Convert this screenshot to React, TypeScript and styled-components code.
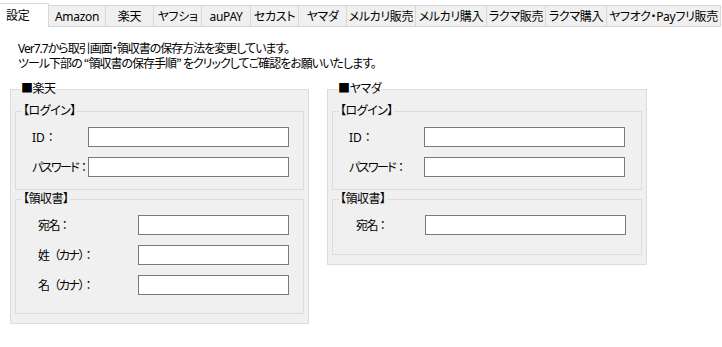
import React from "react";
import styled, { createGlobalStyle } from "styled-components";

const Global = createGlobalStyle`
  html, body { margin: 0; padding: 0; background: #ffffff; }
  body {
    font-family: "Noto Sans", "Noto Sans CJK JP", sans-serif;
    font-size: 12px;
    color: #000;
    font-feature-settings: "palt";
  }
  * { box-sizing: border-box; }
`;

const Window = styled.div`
  width: 722px;
  height: 347px;
  background: #fff;
  overflow: hidden;
`;

const TabBar = styled.div`
  display: flex;
  align-items: flex-end;
  height: 27px;
`;

const Tab = styled.div<{ $w: number; $active?: boolean }>`
  width: ${(p) => p.$w}px;
  height: ${(p) => (p.$active ? 24 : 22)}px;
  margin-left: -1px;
  display: flex;
  align-items: center;
  justify-content: ${(p) => (p.$active ? "flex-start" : "center")};
  padding-left: ${(p) => (p.$active ? 6 : 0)}px;
  padding-bottom: ${(p) => (p.$active ? 2 : 0)}px;
  border: 1px solid #d9d9d9;
  border-bottom: ${(p) => (p.$active ? "none" : "1px solid #d9d9d9")};
  background: ${(p) => (p.$active ? "#ffffff" : "#f0f0f0")};
  white-space: nowrap;
  letter-spacing: -0.3px;
  position: relative;
  z-index: ${(p) => (p.$active ? 1 : 0)};
  &:first-child { margin-left: 0; border-left: none; }
`;

const Body = styled.div`
  padding: 15px 0 0 10px;
`;

const Notes = styled.div`
  padding-left: 8px;
  line-height: 14px;
  letter-spacing: -1px;
`;

const Groups = styled.div`
  display: flex;
  align-items: flex-start;
  gap: 18px;
  margin-top: 10px;
`;

const Outer = styled.fieldset<{ $w: number; $h: number }>`
  margin: 0;
  width: ${(p) => p.$w}px;
  height: ${(p) => p.$h}px;
  border: 1px solid #dcdcdc;
  background: #f0f0f0;
  padding: 6px 4px 0 4px;
  min-width: 0;
  display: flex;
  flex-direction: column;
  gap: 1px;
`;

const Inner = styled.fieldset<{ $h: number }>`
  margin: 0;
  height: ${(p) => p.$h}px;
  border: 1px solid #dcdcdc;
  padding: 8px 0 0 0;
  min-width: 0;
  display: flex;
  flex-direction: column;
  gap: 10px;
`;

const Legend = styled.legend<{ $ml: number }>`
  padding: 0 1px;
  margin-left: ${(p) => p.$ml}px;
  line-height: 16px;
  letter-spacing: -0.5px;
`;

const Row = styled.div<{ $pl: number; $lw: number }>`
  display: grid;
  grid-template-columns: ${(p) => p.$lw}px auto;
  align-items: center;
  padding-left: ${(p) => p.$pl}px;
  height: 20px;
`;

const Label = styled.span<{ $ls: number }>`
  white-space: nowrap;
  letter-spacing: ${(p) => p.$ls}px;
`;

const Wide = styled.span`
  font-family: "Noto Sans CJK JP", sans-serif;
  font-feature-settings: normal;
`;

const Input = styled.div<{ $w: number }>`
  width: ${(p) => p.$w}px;
  height: 20px;
  background: #fff;
  border: 1px solid #7a7a7a;
`;

const tabs: [string, number][] = [
  ["設定", 49],
  ["Amazon", 58],
  ["楽天", 49],
  ["ヤフショ", 49],
  ["auPAY", 50],
  ["セカスト", 49],
  ["ヤマダ", 49],
  ["メルカリ販売", 70],
  ["メルカリ購入", 72],
  ["ラクマ販売", 60],
  ["ラクマ購入", 62],
  ["ヤフオク・Payフリ販売", 115],
];

type F = { label: string; pl: number; lw: number; w: number; ls?: number };

const widen = (text: string, chars: string) =>
  Array.from(text).reduce<React.ReactNode[]>((acc, ch, i) => {
    if (chars.includes(ch)) {
      acc.push(<Wide key={i}>{ch}</Wide>);
    } else if (typeof acc[acc.length - 1] === "string") {
      acc[acc.length - 1] = (acc[acc.length - 1] as string) + ch;
    } else {
      acc.push(ch);
    }
    return acc;
  }, []);

const Field = ({ label, pl, lw, w, ls = -1.6 }: F) => (
  <Row $pl={pl} $lw={lw}>
    <Label $ls={ls}>{widen(label, "（）：")}</Label>
    <Input $w={w} />
  </Row>
);

export default function App() {
  return (
    <Window>
      <Global />
      <TabBar>
        {tabs.map(([t, w], i) => (
          <Tab key={t} $w={w} $active={i === 0}>
            {t}
          </Tab>
        ))}
      </TabBar>
      <Body>
        <Notes>
          <div>Ver7.7から取引画面・領収書の保存方法を変更しています。</div>
          <div>{widen("ツール下部の “領収書の保存手順” をクリックしてご確認をお願いいたします。", "“”")}</div>
        </Notes>
        <Groups>
          <Outer $w={299} $h={243}>
            <Legend $ml={5}>■楽天</Legend>
            <Inner $h={87}>
              <Legend $ml={6}>【ログイン】</Legend>
              <Field label="ID：" pl={16} lw={56} w={201} ls={0} />
              <Field label="パスワード：" pl={16} lw={56} w={201} />
            </Inner>
            <Inner $h={123}>
              <Legend $ml={6}>【領収書】</Legend>
              <Field label="宛名：" pl={22} lw={100} w={151} />
              <Field label="姓（カナ）：" pl={22} lw={100} w={151} />
              <Field label="名（カナ）：" pl={22} lw={100} w={151} />
            </Inner>
          </Outer>
          <Outer $w={320} $h={184}>
            <Legend $ml={5}>■ヤマダ</Legend>
            <Inner $h={87}>
              <Legend $ml={6}>【ログイン】</Legend>
              <Field label="ID：" pl={16} lw={75} w={201} ls={0} />
              <Field label="パスワード：" pl={16} lw={75} w={201} />
            </Inner>
            <Inner $h={64}>
              <Legend $ml={6}>【領収書】</Legend>
              <Field label="宛名：" pl={23} lw={69} w={201} />
            </Inner>
          </Outer>
        </Groups>
      </Body>
    </Window>
  );
}
